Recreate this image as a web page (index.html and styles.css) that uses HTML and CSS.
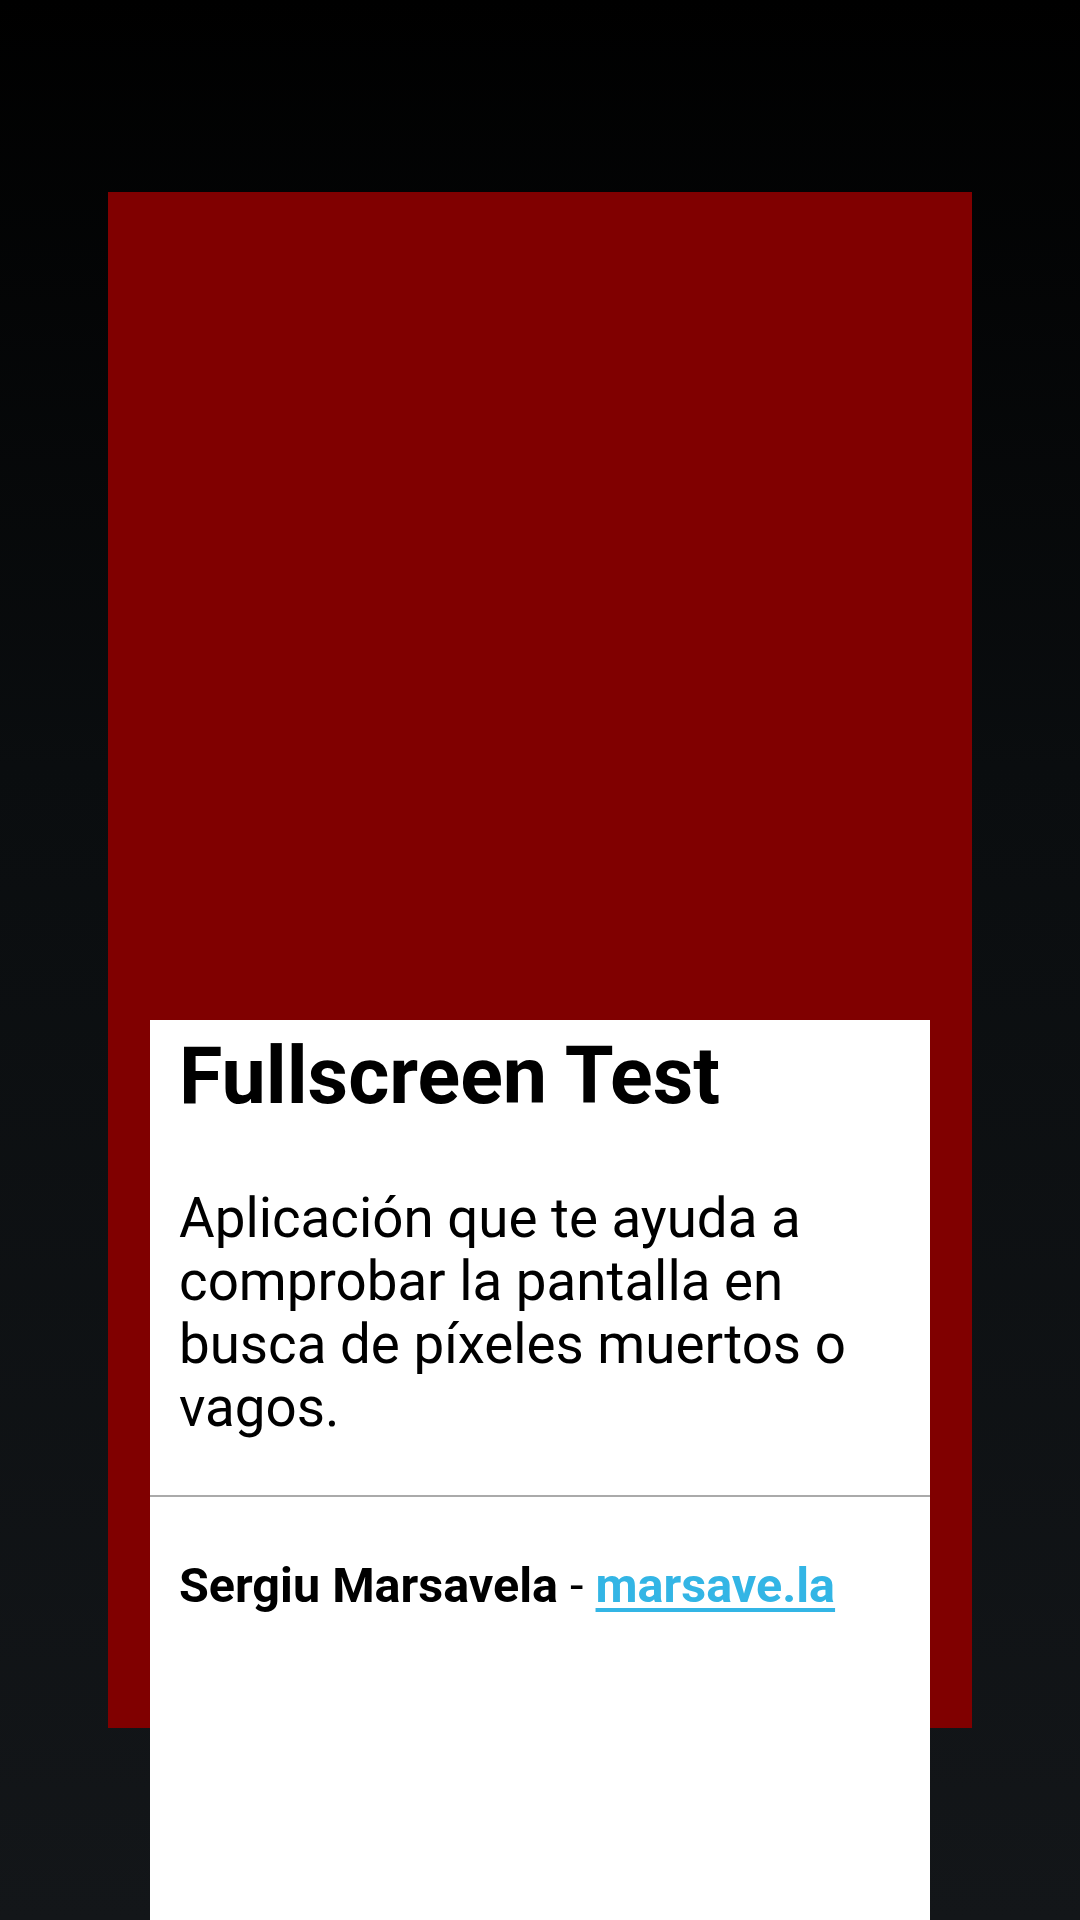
FILE: index.html
```html
<!DOCTYPE html>
<html lang="es">
<head>
<meta charset="utf-8">
<link rel="stylesheet" href="styles.css">
</head>
<body>
<div class="screen">
  <div class="test-area"></div>
  <div class="card">
    <h1 class="title">Fullscreen Test</h1>
    <p class="desc">Aplicación que te ayuda a comprobar la pantalla en busca de píxeles muertos o vagos.</p>
    <hr class="divider">
    <p class="credit"><b>Sergiu Marsavela</b> - <a class="link" href="#">marsave.la</a></p>
  </div>
</div>
</body>
</html>
```
FILE: styles.css
```css
html, body {
  margin: 0;
  padding: 0;
}
body {
  width: 1080px;
  height: 1920px;
  overflow: hidden;
  background: linear-gradient(#000000 0%, #0a0d0f 40%, #131619 100%);
  font-family: Roboto, "Noto Sans", sans-serif;
}
.screen {
  position: relative;
  width: 1080px;
  height: 1920px;
  padding-top: 192px;
  padding-left: 108px;
  box-sizing: border-box;
}
.test-area {
  width: 864px;
  height: 1536px;
  background: #800000;
}
.card {
  position: absolute;
  left: 150px;
  top: 1020px;
  width: 780px;
  height: 900px;
  background: #ffffff;
  box-sizing: border-box;
  padding-top: 9px;
  display: flex;
  flex-direction: column;
}
.title {
  margin: 0 0 0 29px;
  font-size: 79px;
  line-height: 94px;
  font-weight: 700;
  color: #000;
}
.desc {
  margin: 64px 20px 0 29px;
  font-size: 54.7px;
  line-height: 63px;
  font-weight: 400;
  color: #000;
}
.divider {
  margin: 56px 0 0 0;
  border: 0;
  height: 2px;
  background: #aaaaaa;
}
.credit {
  margin: 59px 29px 0 29px;
  font-size: 48.5px;
  line-height: 60px;
  color: #000;
}
.credit b {
  font-weight: 700;
}
.link {
  color: #33b5e5;
  font-weight: 700;
  text-decoration: underline;
  text-decoration-thickness: 4px;
  text-underline-offset: 6px;
}
```
